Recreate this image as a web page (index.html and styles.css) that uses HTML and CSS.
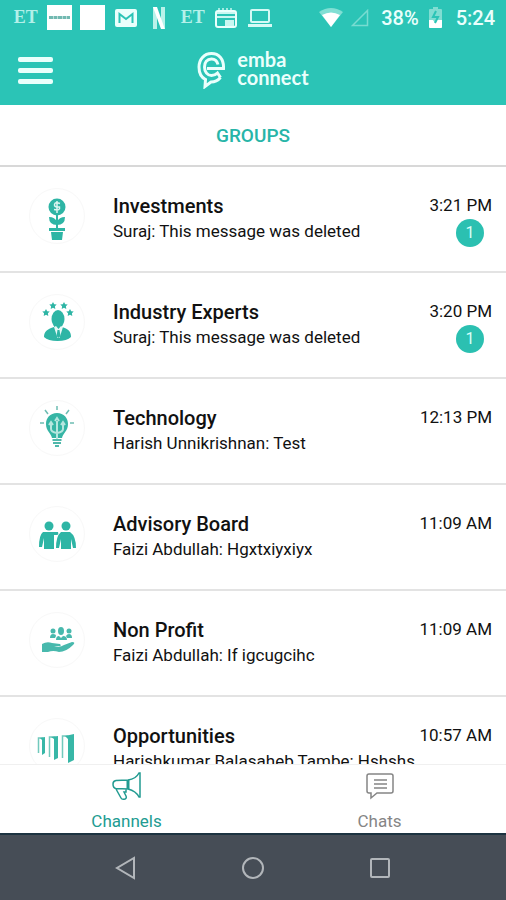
FILE: index.html
```html
<!DOCTYPE html>
<html lang="en">
<head>
<meta charset="utf-8">
<meta name="viewport" content="width=device-width, initial-scale=1">
<title>Groups</title>
<link rel="stylesheet" href="styles.css">
</head>
<body>
<div class="status">
  <div class="notifications">
    <span class="et">ET</span>
    <span><svg width="25" height="25"><path fill="#fff" d="M0 0h25v25H0z"/><path d="M2 12.500h21" stroke="#72b9b1" stroke-width="3" stroke-dasharray="4 .5"/></svg></span>
    <span><svg width="25" height="25"><path fill="#fff" d="M0 0h25v25H0z"/></svg></span>
    <span><svg width="22" height="18"><rect width="22" height="18" rx="2" fill="#eafffc"/><path d="M4.500 14V5L11 10l6.500-5v9" fill="none" stroke="#2bc4b6" stroke-width="2"/></svg></span>
    <span><svg width="14" height="22"><path fill="#b9f2ea" d="M1 0h4v22l-4 .5zM9 0h4v22.500L9 22z"/><path fill="#fff" d="M1 0h4l8 22.500L9 22z"/></svg></span>
    <span class="et">ET</span>
    <span><svg width="22" height="20"><path d="M4 0v4M8 0v4M12 0v4M16 0v4" stroke="#c9f7f1" stroke-width="1.500"/><rect x="1" y="3" width="20" height="16" rx="2" fill="none" stroke="#eafffc" stroke-width="2"/><path d="M2 4h18v2H2zM2 8h18v2H2zM10 12h9v6h-9z" fill="#c9f7f1"/></svg></span>
    <span><svg width="24" height="20" fill="none" stroke="#d5faf5" stroke-width="2"><rect x="3" y="2" width="18" height="12" rx="1"/><path d="M0 17.500h24" stroke-width="3"/></svg></span>
  </div>
  <div class="system">
    <svg width="24" height="20"><path fill="#81dfd4" d="M0 4Q12-4 24 4L12 19z"/><path fill="#fff" d="M3 7Q12 2 21 7L12 19z"/></svg>
    <svg class="signal" width="18" height="18"><path d="M1.500 16.500h15v-15z" fill="none" stroke="#78dcd1" stroke-width="1.500"/></svg>
    <span class="percent">38%</span>
    <svg class="battery" width="13" height="21"><path fill="#80ddd2" d="M4 0h5v2h3q1 0 1 1v17q0 1-1 1H1q-1 0-1-1V3q0-1 1-1h3z"/><path fill="#fff" d="M0 13h4l2 3 2-3h5v7q0 1-1 1H1q-1 0-1-1z"/><path d="M7 4L4 10h5l-3 6" stroke="#2bc4b6" fill="none" stroke-width="2"/></svg>
    <span>5:24</span>
  </div>
</div>
<header class="header">
  <button class="menu" aria-label="Menu"><i></i><i></i><i></i></button>
  <div class="brand">
    <svg width="30" height="38" viewBox="0 0 30 38" fill="none" stroke="#eafffc"><path stroke-width="3" d="M10 17.500H26.500C27 8 22 2.500 14.500 2.500C7 2.500 2 8.500 2 16C2 22 4.500 26.500 8.500 28.500L8 35.500L14 31C18 31 21 29.500 23.500 26.500"/><path stroke-width="3" d="M10 17.500H26M21 13.500C20 9.500 17.500 8 14.500 8C10 8 7.500 11.500 7.500 16C7.500 21 10.500 24.500 14.500 24.500C17 24.500 19 23.500 20.500 22L23.500 26.500"/></svg>
    <span class="wordmark">emba<br>connect</span>
  </div>
</header>
<h1 class="tab">GROUPS</h1>
<main class="list">
  <a class="row" href="#">
    <span class="avatar"><svg width="56" height="56" viewBox="0 0 56 56"><circle cx="27" cy="18" r="8.500" fill="#2eb5a5"/><path d="M27 26v14" stroke="#2eb5a5" stroke-width="2"/><path fill="#2eb5a5" d="M19 28q6 0 8 5 2-5 8-5 0 8-8 8t-8-8zM19 39h16v3H19zM21 43h12l-1 8H22z"/><path d="M30 14.500q-5-2-5.500 1t5 2.500q1 4-5.500 2.500M27 12v12" fill="none" stroke="#dcf5f1" stroke-width="1.500"/></svg></span>
    <span class="body"><b>Investments</b><span>Suraj: This message was deleted</span></span>
    <span class="meta"><time>3:21 PM</time><em>1</em></span>
  </a>
  <a class="row" href="#">
    <span class="avatar"><svg width="56" height="56" viewBox="0 0 56 56" fill="#2eb5a5"><path id="star" d="M16 14l1.200 2.200 2.500.3-1.800 1.800.4 2.600-2.300-1.200-2.300 1.200.4-2.600-1.800-1.800 2.500-.3z"/><use href="#star" x="7" y="-7"/><use href="#star" x="18" y="-7"/><use href="#star" x="24"/><ellipse cx="28" cy="24" rx="6.500" ry="9"/><path d="M14 42c0-6 4-8 10-10v-3h8v3c6 2 9 4 9 10q-4 4-13.500 4T14 42z"/><path fill="#e8f8f6" d="M24 32l2-1 2.500 3 2.500-3 2 1-3.500 11h-2z"/><path d="M27.500 35h2l1 6-2 2-2-2z"/></svg></span>
    <span class="body"><b>Industry Experts</b><span>Suraj: This message was deleted</span></span>
    <span class="meta"><time>3:20 PM</time><em>1</em></span>
  </a>
  <a class="row" href="#">
    <span class="avatar"><svg width="56" height="56" viewBox="1 0 56 56"><path d="M28 5v4M16 9l3 4M40 9l-3 4M11 22h4M41 22h4" stroke="#6dbdb3" stroke-width="1.500"/><path fill="#36b5a5" d="M28 12c-7 0-11 5-11 11 0 7 5 9 6 14h10c1-5 6-7 6-14 0-6-4-11-11-11z"/><path d="M28 38V20M22 23v5q0 3 6 4 6-1 6-4v-5M26 20l2-3 2 3M20 24l2-3 2 3M32 24l2-3 2 3" fill="none" stroke="#b6e6df" stroke-width="2"/><path d="M23.500 39h9M24 42h8M26 45h4" stroke="#50b8ab" stroke-width="2"/></svg></span>
    <span class="body"><b>Technology</b><span>Harish Unnikrishnan: Test</span></span>
    <span class="meta"><time>12:13 PM</time></span>
  </a>
  <a class="row" href="#">
    <span class="avatar"><svg width="56" height="56" viewBox="0 0 56 56" fill="#2eb5a5"><circle cx="19" cy="19" r="4.500"/><circle cx="36" cy="19" r="4.500"/><path d="M13 25h15q1 3-1 3h-3v14H14V31l-2 9H9q0-12 4-15zM31 25h9q6 4 6 16h-3l-2-9v10H31V32l-2 9h-3q0-12 5-16z"/></svg></span>
    <span class="body"><b>Advisory Board</b><span>Faizi Abdullah: Hgxtxiyxiyx</span></span>
    <span class="meta"><time>11:09 AM</time></span>
  </a>
  <a class="row" href="#">
    <span class="avatar"><svg width="56" height="56" viewBox="0 0 56 56" fill="#48b9ad"><ellipse cx="31" cy="18" rx="3" ry="4"/><path d="M26 27q0-4 3-4l2 2 2-2q4 0 4 4z"/><circle cx="23" cy="18" r="2.500"/><circle cx="39" cy="18" r="2.500"/><path d="M20 25q0-4 3-4 3 0 3 2l-1 2zM42 25q0-4-3-4-2 0-3 2l1 2zM12 31q5-3 10-1l8 1q2 2-1 2h-5q6 2 10-1l8-3q4 0 1 3-7 7-14 7-6-2-11 0h-6z"/></svg></span>
    <span class="body"><b>Non Profit</b><span>Faizi Abdullah: If igcugcihc</span></span>
    <span class="meta"><time>11:09 AM</time></span>
  </a>
  <a class="row" href="#">
    <span class="avatar"><svg width="56" height="56" viewBox="0 0 56 56"><path d="M8.500 34V19h5M19.500 38V18h6M32.500 39V17h6" fill="none" stroke="#72c9bd" stroke-width="1.500"/><path fill="#38b7a7" d="M10 19l5-1v16l-3 2V21zM21 18l7-1v22l-4 2V20zM35 17l9-2v26l-6 3V20z"/></svg></span>
    <span class="body"><b>Opportunities</b><span>Harishkumar Balasaheb Tambe: Hshshs</span></span>
    <span class="meta"><time>10:57 AM</time></span>
  </a>
</main>
<nav class="tabs">
  <a class="active" href="#"><svg width="32" height="30" viewBox="0 0 32 30" fill="none" stroke="currentColor" stroke-width="1.500"><path d="M17 9L5 9.500Q2 10 2 13q0 4 3 4.500l12 .5zM17 9q8-1 11-7h1v24h-1q-3-6-11-8M5 18l5 9q1 2 4 1 2-1 1-3l-2-4h2v-3"/><path d="M17 9v9" stroke-width="3"/></svg>Channels</a>
  <a href="#"><svg width="32" height="30" viewBox="0 0 32 30" fill="none" stroke="currentColor" stroke-width="1.500"><path d="M5 3h22q2 0 2 2v15q0 2-2 2H13l-6 5v-5H5q-2 0-2-2V5q0-2 2-2z"/><path d="M10 9h13M10 13h13M10 17h13"/></svg>Chats</a>
</nav>
<div class="system-nav">
  <button aria-label="Back"><svg width="24" height="24"><path d="M20 2v20L3 12z"/></svg></button>
  <button aria-label="Home"><svg width="24" height="24"><circle cx="12" cy="12" r="10"/></svg></button>
  <button aria-label="Recent apps"><svg width="24" height="24"><rect x="3" y="3" width="18" height="18" rx="1"/></svg></button>
</div>
</body>
</html>
```
FILE: styles.css
```css
* { box-sizing: border-box; }
body {
  margin: 0;
  height: 100vh;
  display: flex;
  flex-direction: column;
  background: #fff;
  color: #111;
  font-family: Roboto, "Liberation Sans", sans-serif;
}
a { color: inherit; text-decoration: none; }
button { border: 0; padding: 0; background: none; }
svg { display: block; flex: none; }

.status, .header { background: #2bc4b6; color: #eafffc; flex: none; }
.status {
  height: 35px;
  padding: 0 11px 0 9px;
  display: flex;
  justify-content: space-between;
  align-items: center;
}
.notifications { display: flex; flex: 0 0 55%; align-items: center; }
.notifications span { flex: 1; display: flex; justify-content: center; }
.notifications .et { font: bold 18px "Liberation Serif", serif; color: #b4f0e9; }
.system { display: flex; align-items: center; font-size: 20px; font-weight: 500; }
.signal { margin-left: 8px; }
.percent { margin-left: 12px; }
.battery { margin: 0 14px 0 10px; }

.header {
  height: 70px;
  padding: 0 18px;
  display: grid;
  grid-template-columns: 1fr auto 1fr;
  align-items: center;
}
.menu { width: 35px; display: grid; gap: 6px; }
.menu i { height: 5px; border-radius: 2px; background: #eafffc; }
.brand { display: flex; align-items: center; gap: 10px; }
.wordmark { padding-bottom: 4px; font: bold 20px/18px Lato, sans-serif; }

.tab {
  flex: none;
  margin: 0;
  height: 62px;
  border-bottom: 2px solid #d8d8d8;
  color: #27b5a8;
  font-size: 19px;
  font-weight: 500;
  line-height: 62px;
  text-align: center;
}

.list { flex: 1; min-height: 0; overflow: hidden; }
.row {
  height: 106px;
  padding: 0 14px 0 29px;
  display: flex;
  border-bottom: 2px solid #e3e3e3;
}
.avatar {
  width: 56px;
  height: 56px;
  margin: 21px 28px 0 0;
  border: 1px solid #f8f8f8;
  border-radius: 50%;
  display: grid;
  place-items: center;
}
.body { flex: 1; min-width: 0; padding-top: 27px; white-space: nowrap; }
.body b, .body span { display: block; line-height: 25px; }
.body b { font-size: 20px; font-weight: 500; }
.body span { font-size: 17px; }
.meta { padding-top: 27px; text-align: right; font-size: 17px; line-height: 22px; }
.meta time { display: block; }
.meta em {
  width: 28px;
  height: 28px;
  margin: 3px 8px 0 auto;
  border-radius: 50%;
  background: #2bc0b1;
  color: #d9fff9;
  font-size: 16px;
  font-style: normal;
  line-height: 28px;
  text-align: center;
  display: block;
}

.tabs {
  flex: none;
  height: 69px;
  display: flex;
  border-top: 1px solid #f0f0f0;
}
.tabs a {
  flex: 1;
  display: flex;
  flex-direction: column;
  align-items: center;
  gap: 8px;
  padding-top: 6px;
  color: #858585;
  font-size: 17px;
  line-height: 24px;
}
.tabs .active { color: #229b91; }

.system-nav {
  flex: none;
  height: 67px;
  padding: 0 63px;
  display: flex;
  align-items: center;
  border-top: 2px solid #1d3341;
  background: #464d56;
}
.system-nav button { flex: 1; display: grid; place-items: center; }
.system-nav svg { fill: none; stroke: #b2b6ba; stroke-width: 2; }
```
